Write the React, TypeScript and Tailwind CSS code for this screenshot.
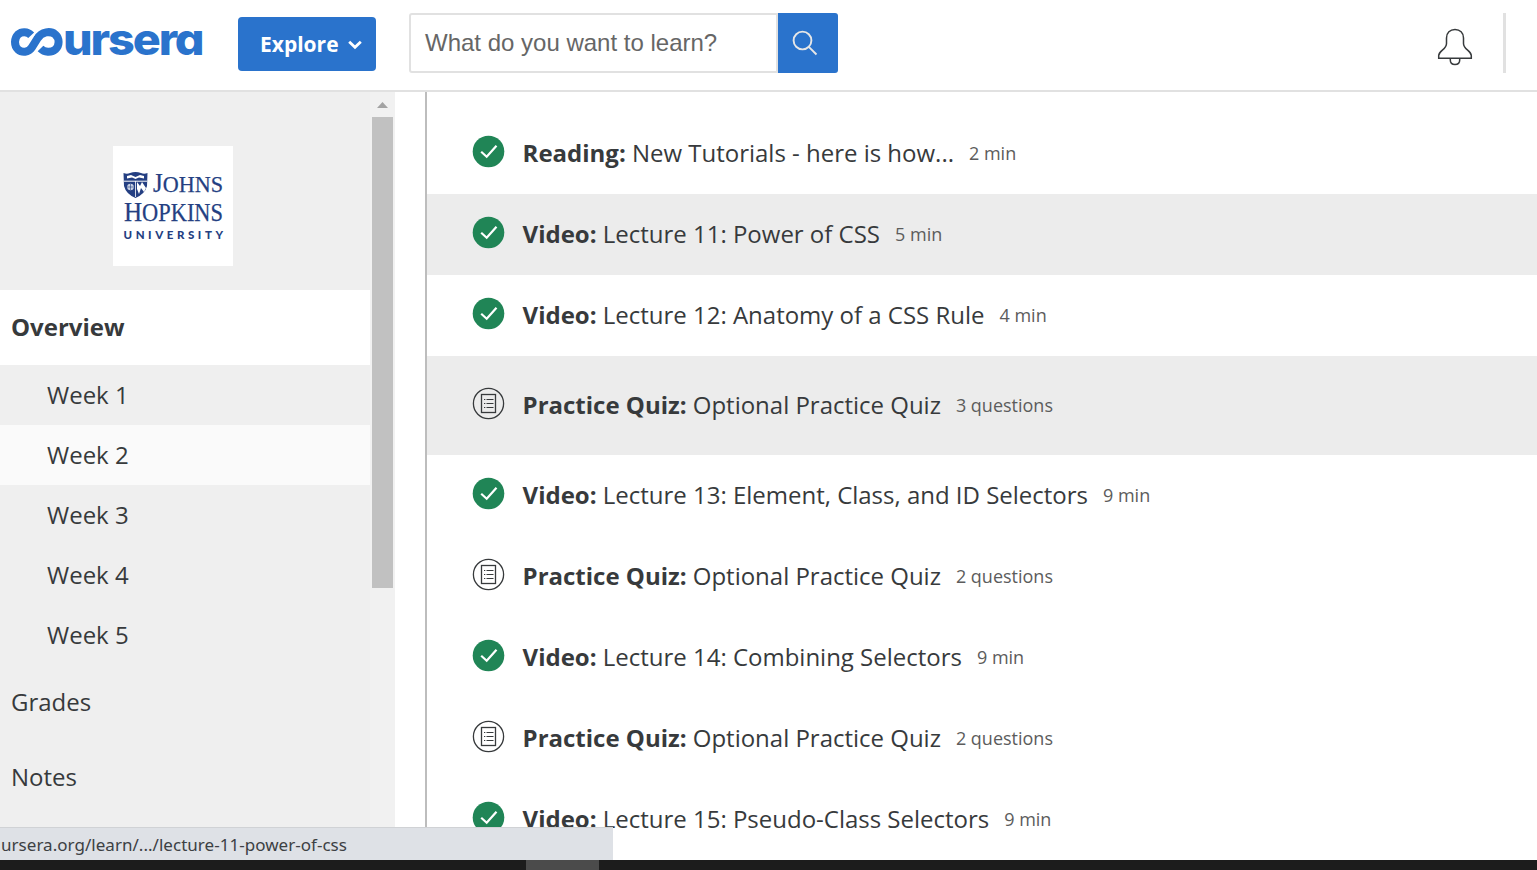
import React from "react";

type Item = { kind: "Reading" | "Video" | "Practice Quiz"; title: string; meta: string; shaded?: boolean; tall?: boolean };

const items: Item[] = [
  { kind: "Reading", title: "New Tutorials - here is how...", meta: "2 min" },
  { kind: "Video", title: "Lecture 11: Power of CSS", meta: "5 min", shaded: true },
  { kind: "Video", title: "Lecture 12: Anatomy of a CSS Rule", meta: "4 min" },
  { kind: "Practice Quiz", title: "Optional Practice Quiz", meta: "3 questions", shaded: true, tall: true },
  { kind: "Video", title: "Lecture 13: Element, Class, and ID Selectors", meta: "9 min" },
  { kind: "Practice Quiz", title: "Optional Practice Quiz", meta: "2 questions" },
  { kind: "Video", title: "Lecture 14: Combining Selectors", meta: "9 min" },
  { kind: "Practice Quiz", title: "Optional Practice Quiz", meta: "2 questions" },
  { kind: "Video", title: "Lecture 15: Pseudo-Class Selectors", meta: "9 min" },
];

const weeks = ["Week 1", "Week 2", "Week 3", "Week 4", "Week 5"];

function CourseraLogo() {
  return (
    <svg width="204" height="60" viewBox="0 -10 204 60" className="shrink-0 overflow-visible" aria-label="coursera">
      <path
        d="M31.200 13.300C27.500 9.300 21.500 9.300 18 12.500C14 16.500 14 23.500 18 27.500C22 31 28.500 30.500 31.800 25.500L37.500 16.500C41.500 9.500 50.500 8.500 55.300 12.500C59.700 16.500 59.700 23.500 55.300 27.500C51 31 44.500 30.500 40.500 26.500"
        fill="none"
        stroke="#2a73cc"
        strokeWidth="8"
      />
      <text x="63" y="33" textLength="139.500" lengthAdjust="spacingAndGlyphs" fill="#2a73cc" className="font-['Inter'] text-[44px] font-extrabold tracking-[-2px] [font-feature-settings:'cv11']">
        ursera
      </text>
    </svg>
  );
}

function DoneIcon() {
  return (
    <svg width="33" height="33" viewBox="0 0 33 33">
      <circle cx="16.500" cy="16.500" r="15.800" fill="#208556" />
      <path d="M9.200 16.700L14.700 21.700L24.500 10.700" fill="none" stroke="#fff" strokeWidth="2.200" />
    </svg>
  );
}

function QuizIcon() {
  return (
    <svg width="33" height="33" viewBox="0 0 33 33" fill="none" stroke="#373a3c">
      <circle cx="16.500" cy="16.500" r="15.100" strokeWidth="1.300" />
      <rect x="9.500" y="7.500" width="14" height="18" strokeWidth="1.300" />
      <path d="M14.500 12.500H21.500M14.500 16.500H21.500M14.500 20.500H21.500M12 12.500H13.300M12 16.500H13.300M12 20.500H13.300" strokeWidth="1.200" />
    </svg>
  );
}

function HopkinsLogo() {
  return (
    <svg width="120" height="120" viewBox="0 0 120 120" className="bg-white" fill="#243f82">
      <path d="M10.500 27Q14 28.500 17 27Q22.500 25 28 27Q31 28.500 34.500 27L34 40Q32 48 22.500 52Q13 48 11 40Z" />
      <path d="M14 30L18 29L22.500 31L27 29L31 30V32.500L26 31.500L22.500 33L19 31.500L14 32.500Z" fill="#fff" />
      <path d="M11 35.200H34" stroke="#fff" strokeWidth="1" />
      <circle cx="17.500" cy="41" r="3.300" fill="#c8d0e2" />
      <path d="M14.500 41H20.500M17.500 38V44" stroke="#243f82" strokeWidth=".6" />
      <path d="M24 36L27 40L29 36L33 42L31 46L28 42L26 48L24 43Z" fill="#fff" />
      <path d="M22.500 35V51" stroke="#fff" strokeWidth=".8" />
      <g className="font-['Liberation_Serif']" stroke="#243f82" strokeWidth=".25">
        <text y="46" x="40" textLength="70" lengthAdjust="spacingAndGlyphs"><tspan className="text-[27px]">J</tspan><tspan className="text-[24px]">OHNS</tspan></text>
        <text y="74.500" x="11" textLength="99" lengthAdjust="spacingAndGlyphs"><tspan className="text-[28px]">H</tspan><tspan className="text-[25px]">OPKINS</tspan></text>
      </g>
      <text x="10.500" y="92.500" textLength="99.500" className="font-['Lato'] text-[11.500px] font-black">UNIVERSITY</text>
    </svg>
  );
}

export default function App() {
  return (
    <div className="relative flex h-[870px] w-[1537px] flex-col overflow-hidden bg-white font-['Open_Sans',sans-serif] text-[#373a3c]">
      <header className="flex h-[92px] shrink-0 items-start border-b-2 border-[#e1e1e1] bg-white">
        <div className="pt-[12px]"><CourseraLogo /></div>
        <button className="mt-[17px] ml-[34px] flex h-[54px] w-[138px] items-center rounded-[4px] bg-[#2a73cc] pt-[2px] pl-[22px] text-[21px] font-bold text-white">
          <span className="w-[78px] whitespace-nowrap">Explore</span>
          <svg width="14" height="10" viewBox="0 0 14 10" className="ml-[10px]">
            <path d="M1.200 1.800L7 7.300L12.800 1.800" fill="none" stroke="#fff" strokeWidth="2.800" />
          </svg>
        </button>
        <div className="mt-[13px] ml-[33px] flex h-[60px]">
          <div className="flex w-[369px] items-center rounded-l-[3px] border-2 border-[#e1e1e1] pl-[14px] font-['Liberation_Sans',sans-serif] text-[24px] text-[#666]">
            <span className="whitespace-nowrap">What do you want to learn?</span>
          </div>
          <button className="flex w-[60px] items-center rounded-r-[3px] bg-[#2a73cc] pl-[14px]">
            <svg width="26" height="26" viewBox="0 0 26 26" fill="none" stroke="#e7e7e7" strokeWidth="1.900">
              <circle cx="10.500" cy="10.500" r="8.900" />
              <path d="M16.800 16.800L24.500 24.500" />
            </svg>
          </button>
        </div>
        <svg width="36" height="40" viewBox="0 0 36 40" className="mt-[27px] ml-[599px]" fill="none" stroke="#373a3c" strokeWidth="1.500">
          <path d="M1.700 31.300V28.500C2 23.500 9.500 22.500 9.500 16.500V11C9.500 5.800 13 2.500 18 2.500S26.500 5.800 26.500 11V16.500C26.500 22.500 34 23.500 34.300 28.500V31.300Z" />
          <path d="M13.300 31.300V33C13.300 35.700 15.300 37.500 18 37.500S22.700 35.700 22.700 33V31.300" />
        </svg>
        <div className="mt-[13px] ml-[30px] h-[60px] w-[3px] bg-[#e1e1e1]" />
      </header>

      <div className="flex min-h-0 flex-1">
        <aside className="flex w-[395px] shrink-0 bg-[#efefef]">
          <nav className="w-[370px] text-[24px]">
            <div className="flex h-[198px] items-start pt-[54px] pl-[113px]"><HopkinsLogo /></div>
            <div className="flex h-[75px] items-center bg-white pb-[2px] pl-[11px] font-bold">Overview</div>
            {weeks.map((w) => (
              <div key={w} className={w === "Week 2" ? "flex h-[60px] items-center bg-[#fafafa] pl-[47px]" : "flex h-[60px] items-center pl-[47px]"}>{w}</div>
            ))}
            <div className="flex h-[75px] items-center pb-[2px] pl-[11px]">Grades</div>
            <div className="flex h-[75px] items-center pb-[2px] pl-[11px]">Notes</div>
          </nav>
          <div className="flex w-[25px] flex-col bg-[#f1f1f1] pl-[2px]">
            <svg width="21" height="25" viewBox="0 0 21 25"><path d="M5 16L10.500 10L16 16Z" fill="#a3a3a3" /></svg>
            <div className="h-[471px] w-[21px] bg-[#c1c1c1]" />
          </div>
        </aside>

        <main className="ml-[30px] flex-1 border-l-2 border-[#bdbdbd] pt-[21px]">
          {items.map((it, i) => (
            <div key={i} className={`flex items-center whitespace-nowrap pl-[45px] ${it.tall ? "h-[99px]" : "h-[81px]"} ${it.shaded ? "bg-[#ececec]" : ""}`}>
              <div className="mr-[17.6px] mb-[4px]">{it.kind === "Practice Quiz" ? <QuizIcon /> : <DoneIcon />}</div>
              <div className="pb-[2px] text-[24px] tracking-[-0.01px]"><strong className="font-bold">{it.kind}:</strong> {it.title}</div>
              <div className="ml-[15px] text-[18px] text-[#5c5c5c]">{it.meta}</div>
            </div>
          ))}
        </main>
      </div>

      <div className="absolute top-[827px] left-0 flex h-[33px] w-[613px] items-center overflow-hidden border-t border-[#d0d2d5] bg-[#dee1e6] pt-[2px] pl-[1px] font-['Noto_Sans',sans-serif] text-[17px] tracking-[0.03px] whitespace-nowrap text-[#3c4043]">
        ursera.org/learn/.../lecture-11-power-of-css
      </div>
      <div className="absolute top-[860px] left-0 h-[10px] w-full bg-[#1c1c1c] pl-[526px]">
        <div className="h-full w-[73px] bg-[#4b4b4b]" />
      </div>
    </div>
  );
}
